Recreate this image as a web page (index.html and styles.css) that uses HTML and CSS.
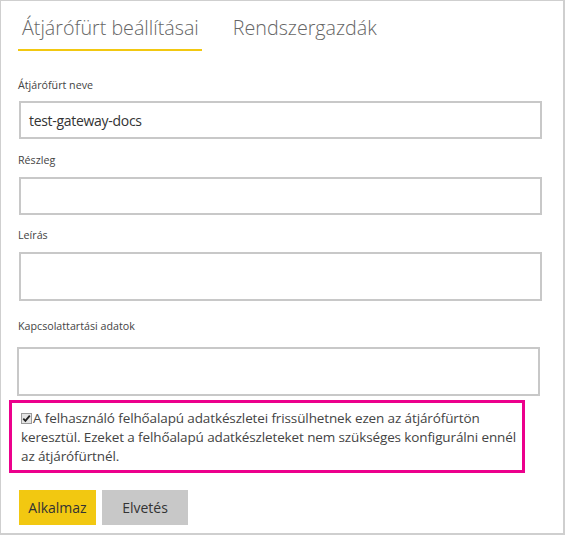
FILE: index.html
```html
<!DOCTYPE html>
<html lang="hu">
<head>
<meta charset="utf-8">
<title>Átjárófürt beállításai</title>
<link rel="stylesheet" href="styles.css">
</head>
<body>
<div class="frame">
  <nav class="tabs">
    <div class="tab tab--active">Átjárófürt beállításai</div>
    <div class="tab">Rendszergazdák</div>
  </nav>
  <form class="form">
    <label class="label label--first">Átjárófürt neve</label>
    <div class="input input--short"><span class="value">test-gateway-docs</span></div>

    <label class="label label--second">Részleg</label>
    <div class="input input--short"></div>

    <label class="label label--third">Leírás</label>
    <div class="input input--tall"></div>

    <label class="label label--fourth">Kapcsolattartási adatok</label>
    <div class="input input--tall input--shift"></div>

    <div class="highlight">
      <p class="check-text"><svg class="checkbox" width="11" height="11" viewBox="0 0 11 11" aria-hidden="true"><rect x="0.5" y="0.5" width="10" height="10" fill="#e4e4e4" stroke="#9a9a9a"/><path d="M2.3 5.6 L4.4 7.9 L8.8 2.6" fill="none" stroke="#222" stroke-width="1.8"/></svg>A felhasználó felhőalapú adatkészletei frissülhetnek ezen az átjárófürtön<br>keresztül. Ezeket a felhőalapú adatkészleteket nem szükséges konfigurálni ennél<br>az átjárófürtnél.</p>
    </div>

    <div class="actions">
      <button type="button" class="btn btn--primary">Alkalmaz</button>
      <button type="button" class="btn btn--secondary">Elvetés</button>
    </div>
  </form>
</div>
</body>
</html>
```
FILE: styles.css
```css
* { box-sizing: border-box; }
html, body { margin: 0; padding: 0; background: #fff; }
body { font-family: "Open Sans", "Noto Sans", "Liberation Sans", sans-serif; color: #333; }

.frame {
  width: 565px;
  height: 535px;
  border-top: 1px solid #cfcfcf;
  border-left: 1px solid #cfcfcf;
  border-right: 2px solid #cfcfcf;
  border-bottom: 2px solid #cfcfcf;
  overflow: hidden;
}

.tabs {
  display: flex;
  padding: 13px 0 0 17px;
  gap: 27px;
}
.tab {
  font-size: 19.7px;
  font-weight: 300;
  line-height: 28px;
  color: #666;
  padding: 0 3px 7px 4px;
  border-bottom: 2px solid transparent;
  white-space: nowrap;
}
.tab--active { border-bottom-color: #f2c811; }

.form {
  display: flex;
  flex-direction: column;
  padding: 0 21px 0 17px;
}

.label {
  font-size: 10.7px;
  line-height: 16px;
  color: #444;
  margin-bottom: 8px;
}
.label--first { margin-top: 26px; }
.label--second { margin-top: 13px; margin-bottom: 9px; }
.label--third { margin-top: 12px; margin-bottom: 9px; }
.label--fourth { margin-top: 17px; margin-bottom: 13px; }

.input {
  border: 2px solid #c8c8c8;
  margin-left: 1px;
  background: #fff;
  display: flex;
  align-items: center;
  padding: 0 8px;
}
.input--short { height: 38px; }
.input--tall { height: 49px; }
.input--shift { margin-left: -1px; margin-right: 2px; }
.value { font-size: 14px; letter-spacing: -0.3px; color: #333; }

.highlight {
  margin: 4px 0 0 -9px;
  width: 516px;
  border: 3px solid #ec008c;
  padding: 6px 4px 4px 9px;
}
.check-text {
  margin: 0;
  font-size: 13.5px;
  letter-spacing: -0.12px;
  line-height: 19px;
  color: #444;
  white-space: nowrap;
}
.checkbox { vertical-align: -1px; margin-right: 1px; }

.actions {
  display: flex;
  gap: 6px;
  margin-top: 17px;
  padding-left: 1px;
}
.btn {
  font-family: inherit;
  font-size: 14px;
  color: #333;
  border: 0;
  height: 35px;
  padding: 0;
}
.btn--primary { width: 77px; background: #f2c811; }
.btn--secondary { width: 86px; background: #c8c8c8; }
```
